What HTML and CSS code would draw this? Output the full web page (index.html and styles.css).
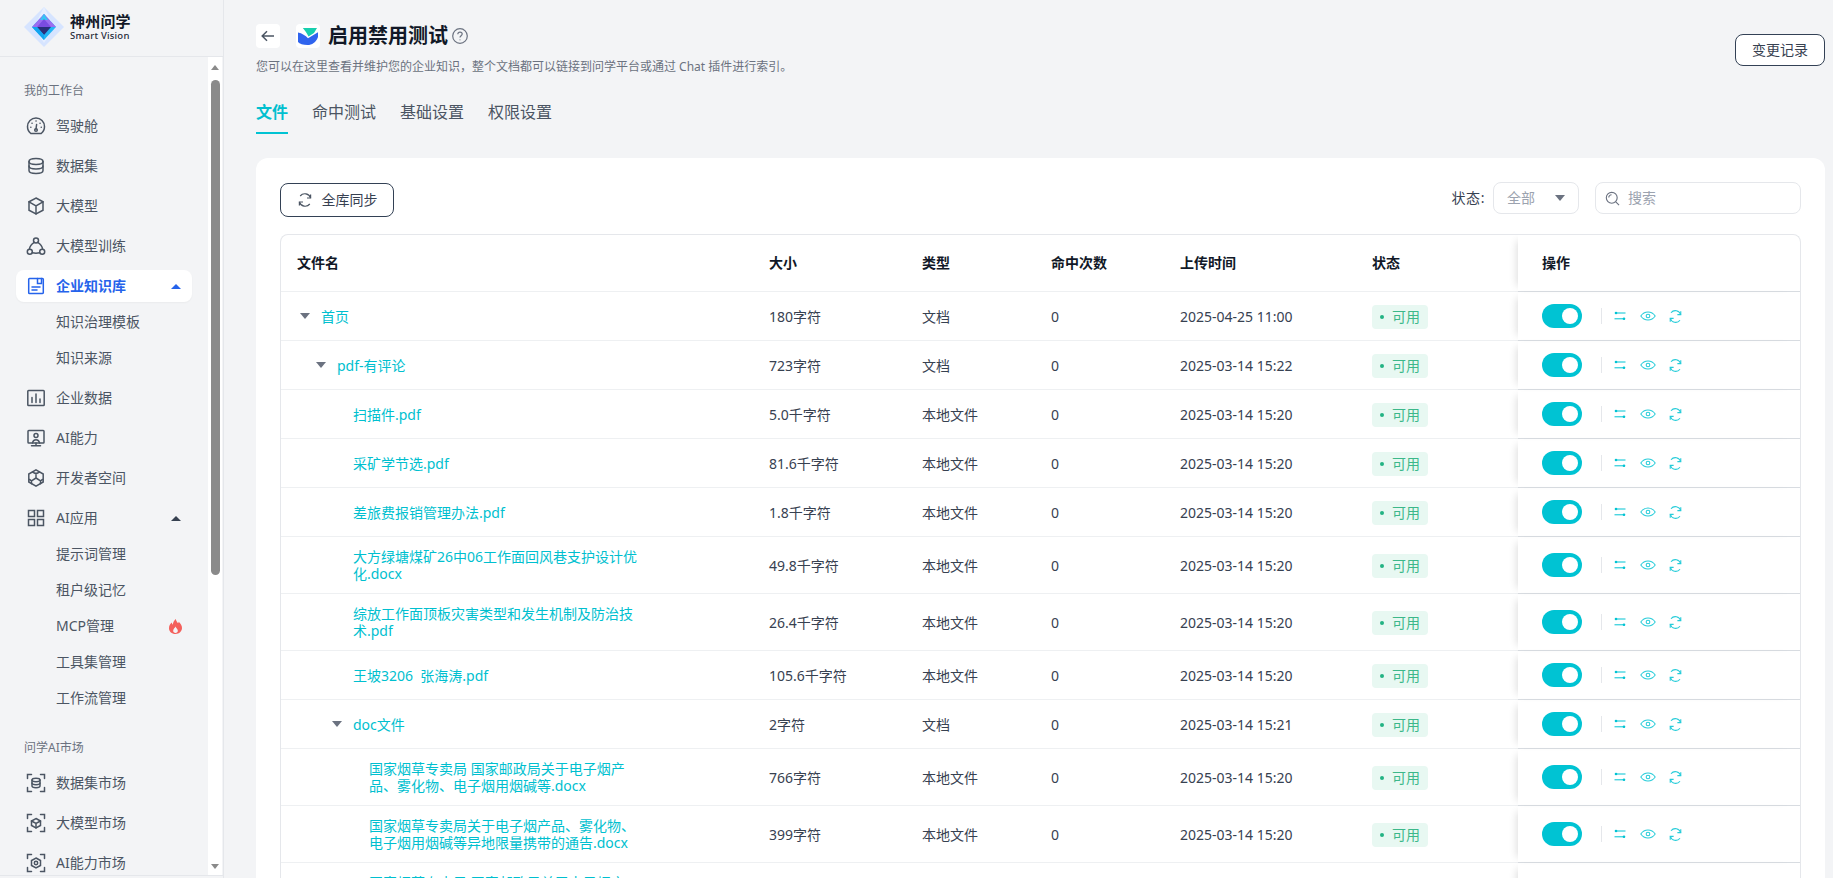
FILE: index.html
```html
<!DOCTYPE html>
<html lang="zh-CN">
<head>
<meta charset="utf-8">
<title>启用禁用测试</title>
<link rel="stylesheet" href="styles.css">
</head>
<body>
<svg class="defs" aria-hidden="true">
  <symbol id="i-gauge" viewBox="0 0 20 20"><path d="M4.800 17.500h10.400c2-1.500 3.300-4 3.300-6.900a8.500 8.500 0 0 0-17 0c0 2.900 1.300 5.400 3.300 6.900z"/><path d="M10 13 10.600 8.500"/><circle cx="10" cy="14" r="1.300"/><path d="M4.800 11.200h.1M6 7.200h.1M10 5h.1M14 7.200h.1M15.200 11.200h.1"/></symbol>
  <symbol id="i-db" viewBox="0 0 20 20"><path d="M3 5.500C3 3.600 6.100 2.500 10 2.500s7 1.100 7 3v9c0 1.900-3.100 3-7 3s-7-1.100-7-3z"/><path d="M3 5.500c0 1.900 3.100 3 7 3s7-1.100 7-3M3 10c0 1.900 3.100 3 7 3s7-1.100 7-3"/></symbol>
  <symbol id="i-cube" viewBox="0 0 20 20"><path d="M10 2 17 5.800v8.400L10 18l-7-3.800V5.800z"/><path d="M3 5.800 10 9.800l7-4M10 9.800V18"/></symbol>
  <symbol id="i-tri" viewBox="0 0 20 20"><circle cx="10" cy="4.500" r="2.500"/><circle cx="3.800" cy="15.800" r="2.500"/><circle cx="16.200" cy="15.800" r="2.500"/><path d="M8.300 6.300C5.500 8 3.800 10.400 3.300 13.300M11.700 6.300c2.800 1.700 4.500 4.100 5 7M6.300 16.800c2.500.6 4.900.6 7.400 0"/></symbol>
  <symbol id="i-doc" viewBox="0 0 20 20"><path d="M3.500 2.500h13a.8.8 0 0 1 .8.800v13.400a.8.8 0 0 1-.8.800h-13a.8.8 0 0 1-.8-.8V3.300a.8.8 0 0 1 .8-.8z"/><path d="M11.500 2.500v5h4v-5M6 11h8M6 14h5"/></symbol>
  <symbol id="i-chart" viewBox="0 0 20 20"><rect x="1.800" y="2.500" width="16.400" height="15" rx=".8"/><path d="M6 9.500v5M10 6v8.500M14 11v3.500"/></symbol>
  <symbol id="i-screen" viewBox="0 0 20 20"><rect x="2" y="2.500" width="16" height="12.500" rx=".8"/><circle cx="10" cy="7.500" r="2"/><path d="M6.500 15c.3-2 1.700-3.200 3.500-3.200s3.200 1.200 3.500 3.200M10 15v2.500M5.500 17.800h9"/></symbol>
  <symbol id="i-hex" viewBox="0 0 20 20"><path d="M10 1.800 17.200 6v8L10 18.200 2.800 14V6z"/><path d="M10 10V5M10 10l4.500 2.800M10 10l-4.500 2.800M6.500 4 10 6l3.500-2M3.500 11.500l2 1.300v3M16.500 11.500l-2 1.300v3"/></symbol>
  <symbol id="i-grid" viewBox="0 0 20 20"><rect x="2.500" y="2.500" width="6" height="6"/><rect x="11.500" y="2.500" width="6" height="6"/><rect x="2.500" y="11.500" width="6" height="6"/><rect x="11.500" y="11.500" width="6" height="6"/></symbol>
  <symbol id="i-m-db" viewBox="0 0 20 20"><path d="M1.500 5.500v-4h4M14.500 1.500h4v4M18.500 14.500v4h-4M5.500 18.500h-4v-4"/><path d="M6 7c0-1 1.800-1.700 4-1.700s4 .7 4 1.700v6c0 1-1.800 1.700-4 1.700S6 14 6 13z"/><path d="M6 7c0 1 1.800 1.700 4 1.700S14 8 14 7M6 10c0 1 1.800 1.700 4 1.700s4-.7 4-1.700"/></symbol>
  <symbol id="i-m-cube" viewBox="0 0 20 20"><path d="M1.500 5.500v-4h4M14.500 1.500h4v4M18.500 14.500v4h-4M5.500 18.500h-4v-4"/><path d="M10 5.500 14.500 8v4.500L10 15l-4.500-2.500V8z"/><path d="M5.500 8 10 10.500 14.500 8M10 10.500V15"/></symbol>
  <symbol id="i-m-eye" viewBox="0 0 20 20"><path d="M1.500 5.500v-4h4M14.500 1.500h4v4M18.500 14.500v4h-4M5.500 18.500h-4v-4"/><path d="M10 5 14.500 7.500v5L10 15l-4.500-2.500v-5z"/><circle cx="10" cy="10" r="1.700"/></symbol>
  <symbol id="i-sync" viewBox="0 0 20 20"><path d="M17 7.500A7.500 7.500 0 0 0 4 5M3 12.500A7.500 7.500 0 0 0 16 15"/><path d="M17 3v4.500h-4.500M3 17v-4.500h4.500"/></symbol>
  <symbol id="i-eye" viewBox="0 0 20 20"><path d="M1 10c2.200-3.300 5.200-5 9-5s6.800 1.700 9 5c-2.200 3.300-5.200 5-9 5s-6.800-1.700-9-5z"/><circle cx="10" cy="10" r="2.300"/></symbol>
  <symbol id="i-set" viewBox="0 0 12 12"><path d="M1 3h10.500M.5 8.800H11"/><circle cx="2" cy="3" r="1.300" class="solid"/><circle cx="10" cy="8.800" r="1.300" class="solid"/></symbol>
</svg>

<aside class="sidebar">
  <div class="brand">
    <svg class="brand-mark" viewBox="0 0 40 40">
      <path d="M20 0 40 20 20 40 0 20z" fill="#d6e4ff"/>
      <path d="M20 0 30 20 20 36 10 20z" fill="#e6efff"/>
      <path d="M20 7 32 20 20 33 8 20z" fill="#22b5f5"/>
      <path d="M20 7 32 20H8z" fill="#9b6cf0"/>
      <path d="M20 7 24 13H16z" fill="#35c5f5"/>
      <path d="M20 12 27 20H13z" fill="#7b4ce0"/>
      <path d="M13 20h14l-7 8z" fill="#2a2f7a"/>
      <path d="M8 20 20 33V28l-7-8z" fill="#12a4f0"/>
    </svg>
    <div class="brand-text">
      <span class="brand-cn">神州问学</span>
      <span class="brand-en">Smart Vision</span>
    </div>
  </div>
  <div class="sidebar-body">
    <nav class="nav">
      <div class="nav-label">我的工作台</div>
      <a class="nav-item"><svg class="ni"><use href="#i-gauge"/></svg>驾驶舱</a>
      <a class="nav-item"><svg class="ni"><use href="#i-db"/></svg>数据集</a>
      <a class="nav-item"><svg class="ni"><use href="#i-cube"/></svg>大模型</a>
      <a class="nav-item"><svg class="ni"><use href="#i-tri"/></svg>大模型训练</a>
      <a class="nav-item active"><svg class="ni"><use href="#i-doc"/></svg>企业知识库<span class="up"></span></a>
      <div class="sub">
        <a class="sub-item">知识治理模板</a>
        <a class="sub-item">知识来源</a>
      </div>
      <a class="nav-item"><svg class="ni"><use href="#i-chart"/></svg>企业数据</a>
      <a class="nav-item"><svg class="ni"><use href="#i-screen"/></svg>AI能力</a>
      <a class="nav-item"><svg class="ni"><use href="#i-hex"/></svg>开发者空间</a>
      <a class="nav-item"><svg class="ni"><use href="#i-grid"/></svg>AI应用<span class="up"></span></a>
      <div class="sub">
        <a class="sub-item">提示词管理</a>
        <a class="sub-item">租户级记忆</a>
        <a class="sub-item">MCP管理<svg class="flame" viewBox="0 0 14 16"><path d="M7.300 0c.5 2.500 1.500 3.400 2.500 4.600.4-.5.600-1 .7-1.700C12.600 4.800 14 7 14 9.700 14 13.300 11 16 7 16S0 13.400 0 9.800c0-2.700 1.500-4.500 3-6 .2 1 .5 1.700 1.100 2.300C4.400 3.800 5.400 1.600 7.300 0zM7 8c-.3 1.400-2.500 2.400-2.500 4.600C4.500 14 5.600 15 7 15s2.500-1 2.500-2.400C9.500 10.500 7.400 9.500 7 8z"/></svg></a>
        <a class="sub-item">工具集管理</a>
        <a class="sub-item">工作流管理</a>
      </div>
      <div class="nav-label second">问学AI市场</div>
      <a class="nav-item"><svg class="ni"><use href="#i-m-db"/></svg>数据集市场</a>
      <a class="nav-item"><svg class="ni"><use href="#i-m-cube"/></svg>大模型市场</a>
      <a class="nav-item"><svg class="ni"><use href="#i-m-eye"/></svg>AI能力市场</a>
    </nav>
    <div class="scrollbar">
      <span class="sb-up"></span>
      <span class="sb-thumb"></span>
      <span class="sb-down"></span>
    </div>
  </div>
</aside>

<main class="main">
  <header class="page-head">
    <div>
      <div class="title-row">
        <button class="tile"><svg class="back" viewBox="0 0 16 16"><path d="M14 8H2.500M7 3.200 2.200 8 7 12.800"/></svg></button>
        <span class="tile logo-tile"><svg viewBox="0 0 24 24"><path d="M2 8.500c4 .8 7.500 3 10 5.800l10-6V13c-2 5.500-6 8-10.500 8C7 21 3.500 20 2 18z" fill="#2f64ee"/><path d="M6.800 4H21l-3 5-5.500 3.500C11 9.500 9 6.500 6.800 4z" fill="#17cfae"/></svg></span>
        <h1 class="title">启用禁用测试</h1>
        <svg class="help" viewBox="0 0 16 16"><circle cx="8" cy="8" r="7.300"/><path d="M5.800 6.200C5.900 5 6.800 4.200 8 4.200c1.300 0 2.200.8 2.200 1.900 0 1.700-2.200 1.700-2.200 3.500"/><path d="M8 11.400v.9"/></svg>
      </div>
      <p class="subtitle">您可以在这里查看并维护您的企业知识，整个文档都可以链接到问学平台或通过 Chat 插件进行索引。</p>
    </div>
    <button class="btn btn-log">变更记录</button>
  </header>

  <div class="tabs">
    <span class="tab current">文件</span>
    <span class="tab">命中测试</span>
    <span class="tab">基础设置</span>
    <span class="tab">权限设置</span>
  </div>

  <section class="card">
    <div class="toolbar">
      <button class="btn btn-sync"><svg class="sync-ic" viewBox="0 0 20 20"><use href="#i-sync"/></svg>全库同步</button>
      <div class="filters">
        <span class="filter-label">状态:</span>
        <div class="select">全部<span class="caret"></span></div>
        <div class="search"><svg class="search-ic" viewBox="0 0 16 16"><circle cx="7.200" cy="7.200" r="5.800"/><path d="M11.500 11.500 15 15M4 7c0-1.700 1.400-3 3-3"/></svg>搜索</div>
      </div>
    </div>

    <div class="table-wrap">
      <table class="table">
        <colgroup><col class="c1"><col class="c2"><col class="c3"><col class="c4"><col class="c5"><col class="c6"><col class="c7"></colgroup>
        <thead>
          <tr><th>文件名</th><th>大小</th><th>类型</th><th>命中次数</th><th>上传时间</th><th>状态</th><th class="fixed">操作</th></tr>
        </thead>
        <tbody>
          <tr>
            <td><div class="name lvl0"><span class="tree-caret"></span><span class="fname">首页</span></div></td>
            <td>180字符</td><td>文档</td><td>0</td><td>2025-04-25 11:00</td><td><span class="tag">可用</span></td>
            <td class="fixed"><div class="ops"><span class="toggle"></span><span class="sep"></span><svg class="op op-set"><use href="#i-set"/></svg><svg class="op op-eye"><use href="#i-eye"/></svg><svg class="op op-sync"><use href="#i-sync"/></svg></div></td>
          </tr>
          <tr>
            <td><div class="name lvl1"><span class="tree-caret"></span><span class="fname">pdf-有评论</span></div></td>
            <td>723字符</td><td>文档</td><td>0</td><td>2025-03-14 15:22</td><td><span class="tag">可用</span></td>
            <td class="fixed"><div class="ops"><span class="toggle"></span><span class="sep"></span><svg class="op op-set"><use href="#i-set"/></svg><svg class="op op-eye"><use href="#i-eye"/></svg><svg class="op op-sync"><use href="#i-sync"/></svg></div></td>
          </tr>
          <tr>
            <td><div class="name lvl2"><span class="tree-gap"></span><span class="fname">扫描件.pdf</span></div></td>
            <td>5.0千字符</td><td>本地文件</td><td>0</td><td>2025-03-14 15:20</td><td><span class="tag">可用</span></td>
            <td class="fixed"><div class="ops"><span class="toggle"></span><span class="sep"></span><svg class="op op-set"><use href="#i-set"/></svg><svg class="op op-eye"><use href="#i-eye"/></svg><svg class="op op-sync"><use href="#i-sync"/></svg></div></td>
          </tr>
          <tr>
            <td><div class="name lvl2"><span class="tree-gap"></span><span class="fname">采矿学节选.pdf</span></div></td>
            <td>81.6千字符</td><td>本地文件</td><td>0</td><td>2025-03-14 15:20</td><td><span class="tag">可用</span></td>
            <td class="fixed"><div class="ops"><span class="toggle"></span><span class="sep"></span><svg class="op op-set"><use href="#i-set"/></svg><svg class="op op-eye"><use href="#i-eye"/></svg><svg class="op op-sync"><use href="#i-sync"/></svg></div></td>
          </tr>
          <tr>
            <td><div class="name lvl2"><span class="tree-gap"></span><span class="fname">差旅费报销管理办法.pdf</span></div></td>
            <td>1.8千字符</td><td>本地文件</td><td>0</td><td>2025-03-14 15:20</td><td><span class="tag">可用</span></td>
            <td class="fixed"><div class="ops"><span class="toggle"></span><span class="sep"></span><svg class="op op-set"><use href="#i-set"/></svg><svg class="op op-eye"><use href="#i-eye"/></svg><svg class="op op-sync"><use href="#i-sync"/></svg></div></td>
          </tr>
          <tr class="tall">
            <td><div class="name lvl2"><span class="tree-gap"></span><span class="fname">大方绿塘煤矿26中06工作面回风巷支护设计优<br>化.docx</span></div></td>
            <td>49.8千字符</td><td>本地文件</td><td>0</td><td>2025-03-14 15:20</td><td><span class="tag">可用</span></td>
            <td class="fixed"><div class="ops"><span class="toggle"></span><span class="sep"></span><svg class="op op-set"><use href="#i-set"/></svg><svg class="op op-eye"><use href="#i-eye"/></svg><svg class="op op-sync"><use href="#i-sync"/></svg></div></td>
          </tr>
          <tr class="tall">
            <td><div class="name lvl2"><span class="tree-gap"></span><span class="fname">综放工作面顶板灾害类型和发生机制及防治技<br>术.pdf</span></div></td>
            <td>26.4千字符</td><td>本地文件</td><td>0</td><td>2025-03-14 15:20</td><td><span class="tag">可用</span></td>
            <td class="fixed"><div class="ops"><span class="toggle"></span><span class="sep"></span><svg class="op op-set"><use href="#i-set"/></svg><svg class="op op-eye"><use href="#i-eye"/></svg><svg class="op op-sync"><use href="#i-sync"/></svg></div></td>
          </tr>
          <tr>
            <td><div class="name lvl2"><span class="tree-gap"></span><span class="fname">王坡3206&nbsp; 张海涛.pdf</span></div></td>
            <td>105.6千字符</td><td>本地文件</td><td>0</td><td>2025-03-14 15:20</td><td><span class="tag">可用</span></td>
            <td class="fixed"><div class="ops"><span class="toggle"></span><span class="sep"></span><svg class="op op-set"><use href="#i-set"/></svg><svg class="op op-eye"><use href="#i-eye"/></svg><svg class="op op-sync"><use href="#i-sync"/></svg></div></td>
          </tr>
          <tr>
            <td><div class="name lvl2"><span class="tree-caret"></span><span class="fname">doc文件</span></div></td>
            <td>2字符</td><td>文档</td><td>0</td><td>2025-03-14 15:21</td><td><span class="tag">可用</span></td>
            <td class="fixed"><div class="ops"><span class="toggle"></span><span class="sep"></span><svg class="op op-set"><use href="#i-set"/></svg><svg class="op op-eye"><use href="#i-eye"/></svg><svg class="op op-sync"><use href="#i-sync"/></svg></div></td>
          </tr>
          <tr class="tall">
            <td><div class="name lvl3"><span class="tree-gap"></span><span class="fname">国家烟草专卖局 国家邮政局关于电子烟产<br>品、雾化物、电子烟用烟碱等.docx</span></div></td>
            <td>766字符</td><td>本地文件</td><td>0</td><td>2025-03-14 15:20</td><td><span class="tag">可用</span></td>
            <td class="fixed"><div class="ops"><span class="toggle"></span><span class="sep"></span><svg class="op op-set"><use href="#i-set"/></svg><svg class="op op-eye"><use href="#i-eye"/></svg><svg class="op op-sync"><use href="#i-sync"/></svg></div></td>
          </tr>
          <tr class="tall">
            <td><div class="name lvl3"><span class="tree-gap"></span><span class="fname">国家烟草专卖局关于电子烟产品、雾化物、<br>电子烟用烟碱等异地限量携带的通告.docx</span></div></td>
            <td>399字符</td><td>本地文件</td><td>0</td><td>2025-03-14 15:20</td><td><span class="tag">可用</span></td>
            <td class="fixed"><div class="ops"><span class="toggle"></span><span class="sep"></span><svg class="op op-set"><use href="#i-set"/></svg><svg class="op op-eye"><use href="#i-eye"/></svg><svg class="op op-sync"><use href="#i-sync"/></svg></div></td>
          </tr>
          <tr class="tall">
            <td><div class="name lvl3"><span class="tree-gap"></span><span class="fname">国家烟草专卖局 国家邮政局关于电子烟产<br>品标准的公告.docx</span></div></td>
            <td>512字符</td><td>本地文件</td><td>0</td><td>2025-03-14 15:20</td><td><span class="tag">可用</span></td>
            <td class="fixed"><div class="ops"><span class="toggle"></span><span class="sep"></span><svg class="op op-set"><use href="#i-set"/></svg><svg class="op op-eye"><use href="#i-eye"/></svg><svg class="op op-sync"><use href="#i-sync"/></svg></div></td>
          </tr>
        </tbody>
      </table>
    </div>
  </section>
</main>
</body>
</html>
```

FILE: styles.css
```css
* { box-sizing: border-box; }
html, body { height: 100%; }
body {
  margin: 0;
  display: flex;
  overflow: hidden;
  background: #f3f4f6;
  color: #374151;
  font: 14px/22px "Noto Sans", "Noto Sans CJK SC", sans-serif;
}
.defs { display: none; }
h1, p { margin: 0; }
button { font: inherit; color: inherit; cursor: pointer; }

/* sidebar */
.sidebar {
  width: 224px;
  flex: none;
  display: flex;
  flex-direction: column;
  border-right: 1px solid #e5e7eb;
  padding-bottom: 2px;
}
.brand {
  height: 57px;
  flex: none;
  display: flex;
  align-items: center;
  padding: 0 0 2px 24px;
  border-bottom: 1px solid #e5e7eb;
}
.brand-mark { width: 40px; height: 40px; flex: none; }
.brand-text { margin-left: 6px; display: flex; flex-direction: column; color: #111827; }
.brand-cn { font-size: 15px; line-height: 18px; font-weight: 600; letter-spacing: .2px; }
.brand-en { font-size: 9.5px; line-height: 12px; font-weight: 500; letter-spacing: .2px; color: #1f2937; }
.sidebar-body {
  flex: 1;
  min-height: 0;
  display: flex;
  border-bottom: 1px solid #e5e7eb;
}
.nav {
  width: 208px;
  flex: none;
  padding: 24px 16px 0;
  overflow: hidden;
  color: #4b5563;
}
.nav-label { height: 20px; line-height: 20px; margin: 0 0 9px 8px; font-size: 12px; color: #6b7280; }
.nav-label.second { margin-top: 22px; margin-bottom: 9px; }
.nav-item {
  height: 32px;
  margin-bottom: 8px;
  display: flex;
  align-items: center;
  padding: 0 11px 0 10px;
  border-radius: 8px;
}
.ni {
  width: 20px;
  height: 20px;
  margin-right: 10px;
  flex: none;
  fill: none;
  stroke: #4b5563;
  stroke-width: 1.5;
  stroke-linecap: round;
}
.nav-item.active { background: #fff; color: #2563eb; font-weight: 600; box-shadow: 0 1px 2px rgba(0,0,0,.04); }
.nav-item.active .ni { stroke: #2563eb; }
.up {
  margin-left: auto;
  border: 5px solid transparent;
  border-top: 0;
  border-bottom: 5px solid #374151;
}
.nav-item.active .up { border-bottom-color: #2563eb; }
.sub { margin: -6px 0 6px; }
.sub-item { height: 36px; display: flex; align-items: center; padding: 0 10px 0 40px; }
.flame { width: 13px; height: 15px; margin-left: auto; fill: #f4605c; }
.scrollbar {
  width: 14px;
  flex: none;
  background: #fff;
  display: flex;
  flex-direction: column;
  align-items: center;
  padding: 8px 0 6px;
}
.sb-up { border: 4.500px solid transparent; border-top: 0; border-bottom: 5px solid #8a8a8a; }
.sb-down { margin-top: auto; border: 4.500px solid transparent; border-bottom: 0; border-top: 5px solid #8a8a8a; }
.sb-thumb { width: 9px; height: 495px; margin-top: 10px; background: #8a8a8a; border-radius: 5px; }

/* main */
.main { flex: 1; min-width: 0; padding: 24px 8px 0 32px; overflow: hidden; }
.page-head { display: flex; justify-content: space-between; align-items: flex-start; }
.title-row { display: flex; align-items: center; height: 24px; }
.tile {
  width: 24px;
  height: 24px;
  padding: 0;
  border: 0;
  border-radius: 4px;
  background: #fff;
  display: flex;
  align-items: center;
  justify-content: center;
}
.back { width: 16px; height: 16px; fill: none; stroke: #4b5563; stroke-width: 1.500; }
.logo-tile { margin-left: 16px; }
.logo-tile svg { width: 24px; height: 24px; }
.title { margin-left: 8px; font-size: 20px; line-height: 24px; font-weight: 600; color: #111827; }
.help { width: 16px; height: 16px; margin-left: 4px; fill: none; stroke: #6b7280; stroke-width: 1.200; }
.subtitle { margin-top: 9px; font-size: 12px; line-height: 20px; color: #6b7280; }
.btn {
  background: #fff;
  border: 1px solid #334155;
  border-radius: 8px;
  color: #374151;
}
.btn-log { width: 90px; height: 32px; margin-top: 10px; padding: 0; }
.tabs { display: flex; gap: 24px; margin-top: 23px; }
.tab { font-size: 16px; line-height: 24px; padding-bottom: 8px; border-bottom: 2px solid transparent; color: #4b5563; }
.tab.current { color: #00bfcf; font-weight: 600; border-bottom-color: #00c3d3; }

.card { margin-top: 24px; background: #fff; border-radius: 12px; padding: 24px 24px 0; }
.toolbar { display: flex; justify-content: space-between; align-items: flex-start; height: 52px; }
.btn-sync { width: 114px; height: 34px; margin-top: 1px; display: flex; align-items: center; justify-content: center; gap: 9px; padding: 0; }
.sync-ic { width: 16px; height: 16px; fill: none; stroke: #4b5563; stroke-width: 1.500; }
.filters { display: flex; align-items: center; }
.filter-label { color: #374151; margin-right: 8px; letter-spacing: .6px; }
.select, .search {
  height: 32px;
  border: 1px solid #e5e7eb;
  border-radius: 8px;
  display: flex;
  align-items: center;
  color: #9ca3af;
}
.select { width: 86px; padding: 0 13px; justify-content: space-between; }
.caret { border: 5px solid transparent; border-bottom: 0; border-top: 6px solid #6b7280; }
.search { width: 206px; margin-left: 16px; padding: 0 9px; }
.search-ic { width: 15px; height: 15px; margin-right: 8px; fill: none; stroke: #6b7280; stroke-width: 1.200; }

/* table */
.table-wrap { border: 1px solid #e5e7eb; border-bottom: 0; border-radius: 8px 8px 0 0; overflow: hidden; }
.table { width: 1519px; table-layout: fixed; border-collapse: separate; border-spacing: 0; }
.c1 { width: 472px; }
.c2 { width: 153px; }
.c3, .c4 { width: 129px; }
.c5 { width: 192px; }
.c6 { width: 162px; }
.c7 { width: 282px; }
th, td {
  padding: 6px 16px;
  text-align: left;
  border-bottom: 1px solid #eef0f2;
  vertical-align: middle;
  white-space: nowrap;
}
th { height: 57px; font-weight: 600; color: #111827; }
td { height: 49px; padding-top: 7px; padding-bottom: 5px; }
.tall td { height: 57px; }
.fixed {
  padding-left: 24px;
  border-bottom-color: #d8dce1;
  box-shadow: -7px 0 8px -6px rgba(0,0,0,.14);
}
td.fixed { padding-top: 6px; padding-bottom: 6px; }
.name { display: flex; align-items: center; margin-top: -2px; color: #00bfcf; line-height: 17px; }
.lvl1 { margin-left: 16px; }
.lvl2 { margin-left: 32px; }
.lvl3 { margin-left: 48px; }
.tree-caret {
  width: 0;
  height: 0;
  margin: -1px 11px 0 3px;
  border: 5px solid transparent;
  border-bottom: 0;
  border-top: 6px solid #6b7280;
}
.tree-gap { width: 24px; flex: none; }
.tag {
  display: inline-flex;
  align-items: center;
  width: 56px;
  height: 24px;
  margin-top: -1px;
  vertical-align: middle;
  padding-left: 8px;
  border-radius: 4px;
  background: #e8f8f2;
  color: #3cb88a;
}
.tag::before {
  content: "";
  width: 4px;
  height: 4px;
  margin-right: 8px;
  border-radius: 50%;
  background: #23b383;
}
.ops { display: flex; align-items: center; }
.toggle {
  width: 40px;
  height: 24px;
  padding: 4px;
  border-radius: 12px;
  background: #00c3d3;
  display: flex;
  justify-content: flex-end;
}
.toggle::after { content: ""; width: 16px; height: 16px; border-radius: 50%; background: #fff; }
.sep { width: 1px; height: 16px; margin: 0 12px 0 19px; background: #e5e7eb; }
.op { fill: none; stroke: #00c3d3; stroke-width: 1; }
.op-set { width: 12px; height: 12px; margin-right: 14px; }
.solid { fill: #00c3d3; stroke: none; }
.op-eye { width: 16px; height: 16px; margin-right: 12px; stroke: #26ccd9; stroke-width: 1.300; }
.op-sync { width: 15px; height: 15px; stroke: #26ccd9; stroke-width: 1.500; }
```
